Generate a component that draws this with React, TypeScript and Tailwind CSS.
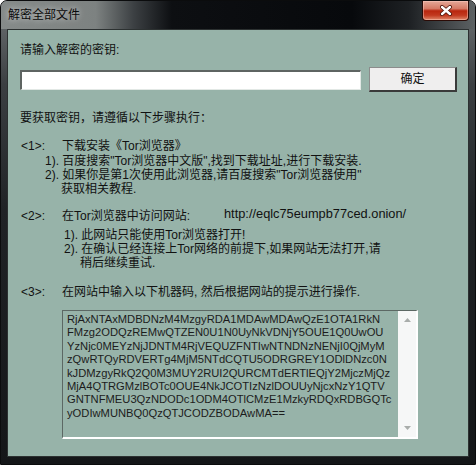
const machineCode = [
  "RjAxNTAxMDBDNzM4MzgyRDA1MDAwMDAwQzE1OTA1RkN",
  "FMzg2ODQzREMwQTZEN0U1N0UyNkVDNjY5OUE1Q0UwOU",
  "YzNjc0MEYzNjJDNTM4RjVEQUZFNTIwNTNDNzNENjI0QjMyM",
  "zQwRTQyRDVERTg4MjM5NTdCQTU5ODRGREY1ODlDNzc0N",
  "kJDMzgyRkQ2Q0M3MUY2RUI2QURCMTdERTlEQjY2MjczMjQz",
  "MjA4QTRGMzlBOTc0OUE4NkJCOTIzNzlDOUUyNjcxNzY1QTV",
  "GNTNFMEU3QzNDODc1ODM4OTlCMzE1MzkyRDQxRDBGQTc",
  "yODIwMUNBQ0QzQTJCODZBODAwMA==",
];

function CloseButton() {
  return (
    <div className="mr-[6px] flex h-[20px] w-[47px] items-center justify-center rounded-b-[4px] border border-t-0 border-[#2b0b06] bg-[linear-gradient(180deg,#e4a898_0%,#d57a66_40%,#b9260f_52%,#c2391f_75%,#e0876a_100%)] shadow-[inset_0_0_0_1px_rgba(255,210,200,0.45)]">
      <svg width="14" height="11" viewBox="0 0 14 11">
        <path d="M3 2 L11 9 M11 2 L3 9" stroke="#4a1208" strokeWidth="4" strokeLinecap="round" />
        <path d="M3 2 L11 9 M11 2 L3 9" stroke="#ffffff" strokeWidth="2.4" strokeLinecap="round" />
      </svg>
    </div>
  );
}

function Step({ tag, children }: { tag: string; children: React.ReactNode }) {
  return (
    <div className="ml-[1px] flex h-[14px] leading-[14px]">
      <span className="w-[41px] shrink-0">{tag}</span>
      {children}
    </div>
  );
}

export default function App() {
  return (
    <div className="h-[465px] w-[476px] overflow-hidden rounded-t-[7px] border border-[#0b0c0d] bg-[linear-gradient(180deg,#6f7476_0%,#3b3f42_18%,#202326_45%,#141618_100%)] font-['Liberation_Sans','Noto_Sans_CJK_SC',sans-serif] text-[12px] text-[#111]">
      <div className="flex h-[28px] items-start justify-between bg-[linear-gradient(90deg,#868b8a_0%,#7d8281_20%,#3c4043_28%,#0d0f12_36%,#07090c_74%,#1d2023_86%,#5d6264_100%)]">
        <span className="pl-[7px] pt-[6px] leading-[16px] text-[12px] text-[#0a0a0a] [text-shadow:0_0_6px_rgba(255,255,255,0.7)]">
          解密全部文件
        </span>
        <CloseButton />
      </div>

      <div className="mx-[6px] flex h-[428px] flex-col border border-[#2c3131] bg-[#97b3a9] pl-[12px] pt-[13px]">
        <div className="h-[14px] leading-[14px]">请输入解密的密钥:</div>

        <div className="mt-[10px] flex h-[25px] items-center gap-[8px]">
          <div className="h-[20px] w-[341px] border-b border-l-2 border-r border-t-2 border-b-[#e2e8e5] border-l-[#5e6462] border-r-[#e2e8e5] border-t-[#5e6462] bg-white" />
          <button className="flex h-[25px] w-[88px] items-center justify-center border border-b-2 border-r-2 border-[#8c8c8c] border-b-[#3a3a3a] border-r-[#3a3a3a] bg-[#efeeee] text-[12px] leading-[14px] text-[#111]">
            确定
          </button>
        </div>

        <div className="mt-[19px] h-[14px] leading-[14px]">要获取密钥，请遵循以下步骤执行：</div>

        <div className="mt-[14px]">
          <Step tag="<1>:">
            <span>下载安装《Tor浏览器》</span>
          </Step>
          <div className="mt-[1px] h-[14px] pl-[25px] leading-[14px]">
            1). 百度搜索"Tor浏览器中文版",找到下载址址,进行下载安装.
          </div>
          <div className="h-[14px] pl-[25px] leading-[14px]">
            2). 如果你是第1次使用此浏览器,请百度搜索"Tor浏览器使用"
          </div>
          <div className="h-[14px] pl-[41px] leading-[14px]">获取相关教程.</div>
        </div>

        <div className="mt-[13px]">
          <Step tag="<2>:">
            <span className="w-[162px] shrink-0">在Tor浏览器中访问网站:</span>
            <span className="-mt-[2px] text-[12.8px]">http://eqlc75eumpb77ced.onion/</span>
          </Step>
          <div className="mt-[5px] h-[14px] pl-[44px] leading-[14px]">1). 此网站只能使用Tor浏览器打开!</div>
          <div className="h-[14px] pl-[44px] leading-[14px]">
            2). 在确认已经连接上Tor网络的前提下,如果网站无法打开,请
          </div>
          <div className="h-[14px] pl-[60px] leading-[14px]">稍后继续重试.</div>
        </div>

        <div className="mt-[15px]">
          <Step tag="<3>:">
            <span>在网站中输入以下机器码, 然后根据网站的提示进行操作.</span>
          </Step>
        </div>

        <div className="ml-[42px] mt-[11px] flex h-[129px] w-[356px] border-b-2 border-l border-r-2 border-t border-b-white border-l-[#5c6864] border-r-white border-t-[#5c6864]">
          <div className="flex-1 pl-[4px] pt-[2px] text-[11.2px] leading-[13.4px] text-[#1c1c1c]">
            {machineCode.map((line) => (
              <div key={line} className="whitespace-pre">
                {line}
              </div>
            ))}
          </div>
          <div className="flex w-[18px] flex-col items-center justify-between bg-[#f6f7f7] py-[7px]">
            <svg width="7" height="4" viewBox="0 0 7 4">
              <path d="M0 4 L3.5 0 L7 4 Z" fill="#a9adab" />
            </svg>
            <svg width="7" height="4" viewBox="0 0 7 4">
              <path d="M0 0 L3.5 4 L7 0 Z" fill="#a9adab" />
            </svg>
          </div>
        </div>
      </div>
    </div>
  );
}
